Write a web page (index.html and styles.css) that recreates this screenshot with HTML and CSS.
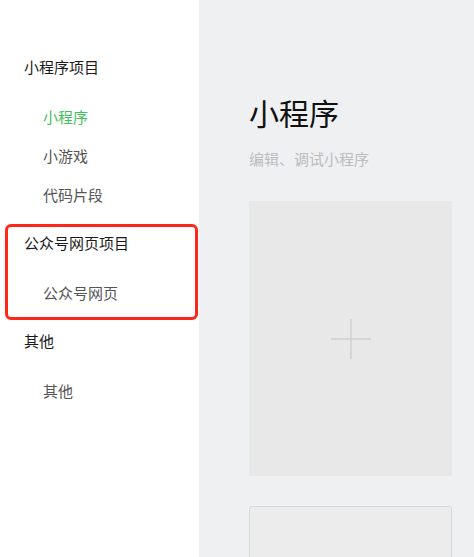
FILE: index.html
```html
<!DOCTYPE html>
<html lang="zh-CN">
<head>
<meta charset="utf-8">
<link rel="stylesheet" href="styles.css">
</head>
<body>
<div class="app">
  <aside class="sidebar">
    <section class="group">
      <div class="group-title">小程序项目</div>
      <ul class="items">
        <li class="item active">小程序</li>
        <li class="item">小游戏</li>
        <li class="item">代码片段</li>
      </ul>
    </section>
    <section class="group marked">
      <div class="group-title">公众号网页项目</div>
      <ul class="items">
        <li class="item">公众号网页</li>
      </ul>
    </section>
    <section class="group">
      <div class="group-title">其他</div>
      <ul class="items">
        <li class="item">其他</li>
      </ul>
    </section>
  </aside>
  <main class="main">
    <h1 class="title">小程序</h1>
    <p class="subtitle">编辑、调试小程序</p>
    <div class="cards">
      <div class="card add">
        <svg class="plus" width="40" height="40" viewBox="0 0 40 40"><path d="M19 0h2v40h-2zM0 19h40v2H0z" fill="#d6d6d6"/></svg>
      </div>
      <div class="card project"></div>
    </div>
  </main>
</div>
</body>
</html>
```
FILE: styles.css
```css
* { box-sizing: border-box; }
html, body { margin: 0; padding: 0; height: 100%; overflow: hidden; }
body {
  font-family: "Noto Sans CJK SC", "Noto Sans", sans-serif;
  background: #eff0f2;
}
.app {
  display: flex;
  height: 557px;
  overflow: hidden;
}
.sidebar {
  width: 199px;
  flex: none;
  background: #ffffff;
  padding-top: 57px;
}
.group {
  position: relative;
  margin-bottom: 19px;
}
.group-title {
  padding-left: 24px;
  font-size: 15px;
  line-height: 20px;
  height: 20px;
  color: #1a1a1a;
}
.items {
  list-style: none;
  margin: 20px 0 0;
  padding: 0;
}
.item {
  padding-left: 43px;
  font-size: 15px;
  line-height: 39px;
  height: 39px;
  color: #555555;
}
.item.active { color: #3fc25a; }
.marked::after {
  content: "";
  position: absolute;
  left: 5px;
  right: 1px;
  top: -9px;
  bottom: -8px;
  border: 3px solid #ff2619;
  border-radius: 6px;
  pointer-events: none;
}
.main {
  flex: 1;
  height: 557px;
  overflow: hidden;
  padding: 92px 0 0 50px;
}
.title {
  margin: 0;
  font-size: 30px;
  line-height: 40px;
  font-weight: normal;
  color: #111111;
}
.subtitle {
  margin: 17px 0 0;
  font-size: 15px;
  line-height: 20px;
  color: #bcbcbc;
}
.cards {
  margin-top: 32px;
  display: flex;
  flex-direction: column;
  gap: 30px;
  width: 203px;
}
.card {
  width: 203px;
  height: 275px;
  flex: none;
}
.card.add {
  background: #e8e8e8;
  display: flex;
  align-items: center;
  justify-content: center;
}
.card.project {
  background: #ececec;
  border: 1px solid #d8d8d8;
  border-radius: 3px;
}
```
